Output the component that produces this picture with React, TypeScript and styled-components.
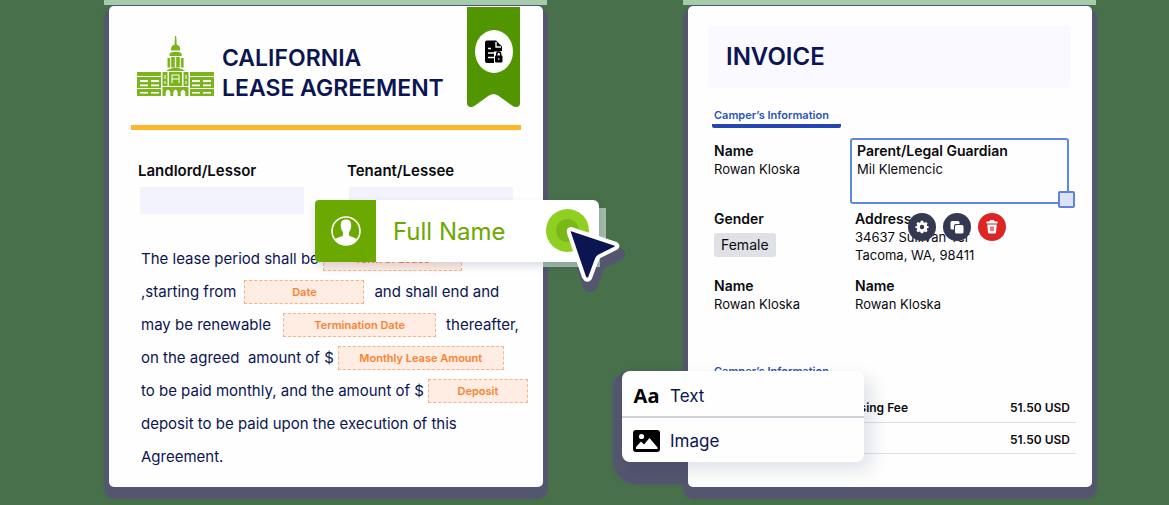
import React from "react";
import styled, { createGlobalStyle } from "styled-components";

const GlobalStyle = createGlobalStyle`
  * { box-sizing: border-box; }
  body { margin: 0; background: #48714b; font-family: Inter, "Liberation Sans", sans-serif; color: #0a0a0f; }
  button, input { font: inherit; color: inherit; }
  h1, h2, p, dl, dd { margin: 0; }
`;

const navy = "#0a1551";
const halo = "#54566f";

const Stage = styled.main`
  display: grid;
  grid-template-columns: minmax(0, 434fr) minmax(0, 404fr);
  column-gap: 145px;
  padding: 6px 77px 18px 109px;
  overflow: hidden;
`;

const Column = styled.div`
  position: relative;
  isolation: isolate;
`;

const TopGlow = styled.div`
  position: absolute;
  inset: -6px -4px auto -5px;
  height: 5px;
  background: #a5cba8;
`;

const Paper = styled.section`
  position: relative;
  height: 100%;
  min-height: 481px;
  background: #fefefe;
  border-radius: 5px;
  box-shadow: 0 -1px 0 0 #4f5382, 0 7px 2px 5px ${halo};
`;

const LeasePaper = styled(Paper)`
  padding: 1px 16px 12px 22px;
`;

const LeaseHeader = styled.header`
  display: flex;
  align-items: flex-start;
  height: 118px;
  padding: 0 7px 0 6px;
`;

const Building = styled.svg`
  flex: none;
  margin-top: 29px;
`;

const LeaseTitle = styled.h1`
  flex: 1;
  margin: 36px 0 0 8px;
  font-size: 23px;
  line-height: 30px;
  font-weight: 600;
  color: ${navy};
  white-space: nowrap;
`;

const RibbonShape = styled.svg`
  flex: none;
`;

const Rule = styled.hr`
  width: 390px;
  max-width: 100%;
  height: 5px;
  margin: 0;
  border: 0;
  background: #ffb629;
`;

const Parties = styled.div`
  display: grid;
  grid-template-columns: 209px 1fr;
  padding: 31px 0 0 7px;
`;

const Party = styled.label`
  display: grid;
  gap: 6px;
  font-size: 15px;
  line-height: 20px;
  font-weight: 600;
`;

const PartyInput = styled.input`
  width: 164px;
  height: 27px;
  margin-left: 2px;
  padding: 0 8px;
  border: 0;
  background: #f3f3fe;
`;

const Terms = styled.div`
  padding: 28px 0 0 10px;
  color: ${navy};
  font-size: 15px;
`;

const Line = styled.p`
  display: flex;
  align-items: center;
  height: 33px;
  white-space: pre;
`;

const Field = styled.button<{ $width: number; $tight?: boolean }>`
  flex: none;
  width: ${(p) => p.$width}px;
  height: 24px;
  margin: 0 10px 0 ${(p) => (p.$tight ? 4 : 8)}px;
  padding: 0;
  border: 1px dashed #f6b48c;
  background: #ffece2;
  color: #f98332;
  font-size: 11px;
  font-weight: 600;
  line-height: 20px;
`;

const NameCard = styled.div`
  position: absolute;
  top: 194px;
  left: 206px;
  display: flex;
  align-items: center;
  width: 284px;
  height: 62px;
  border-radius: 4px 6px 2px 4px;
  background: #fff;
  color: #6ba800;
  font-size: 24px;
  box-shadow: 0 4px 8px rgba(10, 21, 81, 0.14);
`;

const CardGlow = styled.div`
  position: absolute;
  top: 202px;
  left: 434px;
  width: 63px;
  height: 59px;
  background: #a3bba9;
`;

const NameIcon = styled.div`
  display: grid;
  place-items: center;
  width: 61px;
  height: 62px;
  margin-right: 17px;
  border-radius: 4px 0 0 4px;
  background: #6ba800;
`;

const Cursor = styled.svg`
  position: absolute;
  top: 196px;
  left: 434px;
`;

const InvoicePaper = styled(Paper)`
  padding: 19px 16px 20px 20px;
`;

const Banner = styled.header`
  margin-right: 5px;
  padding: 17px 18px 16px;
  border-radius: 4px;
  background: #f9f9ff;
`;

const InvoiceTitle = styled.h2`
  font-size: 24px;
  line-height: 30px;
  font-weight: 600;
  color: ${navy};
`;

const Tab = styled.h3`
  width: 129px;
  margin: 20px 0 0 4px;
  padding: 0 2px 1px;
  border-bottom: 4px solid #2545b0;
  border-radius: 2px;
  color: #2754bd;
  font-size: 11px;
  line-height: 15px;
  font-weight: 600;
  white-space: nowrap;
`;

const Details = styled.dl`
  display: grid;
  grid-template-columns: 141px 1fr;
  grid-template-rows: 68px 67px 67px;
  padding: 14px 2px 0 6px;
  font-size: 13px;
  line-height: 18px;

  dt { font-size: 14px; font-weight: 600; }
`;

const Selected = styled.div`
  position: relative;
  height: 66px;
  margin: -4px 5px 0 -5px;
  padding: 2px 5px;
  border: 2px solid #5b8ae0;
  border-radius: 3px;
`;

const Handle = styled.button`
  position: absolute;
  right: -8px;
  bottom: -6px;
  width: 17px;
  height: 17px;
  padding: 0;
  border: 2px solid #5b84da;
  border-radius: 2px;
  background: #dde2fb;
`;

const Actions = styled.div`
  position: absolute;
  top: 207px;
  left: 220px;
  display: flex;
  gap: 7px;
`;

const Action = styled.button<{ $danger?: boolean }>`
  display: grid;
  place-items: center;
  width: 28px;
  height: 28px;
  padding: 0;
  border: 0;
  border-radius: 50%;
  color: #fff;
  background: ${(p) => (p.$danger ? "#dc2626" : "#343850")};
`;

const Chip = styled.span`
  display: inline-block;
  margin-top: 5px;
  padding: 3px 7px;
  border-radius: 3px;
  background: #dfe1e6;
  font-size: 14px;
`;

const Fees = styled.table`
  width: 100%;
  margin-top: 7px;
  border-collapse: collapse;
  font-size: 12px;
  font-weight: 600;

  td {
    height: 31px;
    padding: 4px 6px 0;
    border-bottom: 1px solid #dfdfe8;
    line-height: 18px;
  }
  td:first-child { width: 200px; padding-right: 0; text-align: right; }
  td:last-child { text-align: right; }
`;

const MenuGlow = styled.div`
  position: absolute;
  top: 366px;
  left: -75px;
  width: 90px;
  height: 112px;
  border-radius: 16px 0 0 24px;
  background: ${halo};
  box-shadow: 0 0 4px ${halo};
`;

const Menu = styled.div`
  position: absolute;
  top: 365px;
  left: -66px;
  width: 242px;
  height: 91px;
  border-radius: 8px;
  background: #fefefe;
  box-shadow: 8px 8px 18px rgba(10, 21, 81, 0.12);
`;

const MenuItem = styled.button`
  display: flex;
  align-items: center;
  gap: 10px;
  width: 100%;
  height: 45px;
  padding: 4px 11px 0;
  border: 0;
  background: none;
  color: ${navy};
  font-size: 17px;
  line-height: 24px;

  & + & { height: 46px; padding-top: 2px; border-top: 2px solid #d0d2da; }
`;

const Letters = styled.span`
  width: 27px;
  color: #000;
  font-family: "Noto Sans", sans-serif;
  font-size: 20px;
  font-weight: 700;
`;

function Capitol() {
  const wing = (
    <>
      <path d="M0 36h24v4H0z M0 41h24v11H0z M0 53h24v7H0z" fill="#7bb41d" />
      <path d="M3 44h8v2H3z M14 44h8v2h-8z M3 48.5h8v1.800H3z M14 48.5h8v1.800h-8z M3 56h8v1.600H3z M14 56h8v1.600h-8z M0 40h24v1H0z" fill="#fff" />
    </>
  );
  return (
    <Building width="77" height="60" viewBox="0 0 77 60" aria-hidden="true">
      {wing}
      <g transform="translate(77 0) scale(-1 1)">{wing}</g>
      <g fill="#7bb41d">
        <path d="M38 0h1.200l.5 9h-2.200z" />
        <path d="M34 13q0-4 4.600-4.600Q43.200 9 43.200 13v1.500h-9.200z" />
        <path d="M32.500 20v-2q1-2.300 6.100-2.300t6.100 2.300v2z" />
        <path d="M30.500 22h2.700v9.500h-2.700zM34.200 21h3.600v10.500h-3.600zM39.200 21h3.600v10.500h-3.600zM43.900 22h2.700v9.500h-2.700z" />
        <path d="M29 35q1.500-2 9.600-3.600Q46.700 33 48.200 35z" />
        <path d="M25.500 36h5v14h-5zM46.500 36h5v14h-5zM32 36h13v14H32z" />
        <path d="M25.500 51h26v9h-3.200v-4q-2.300-4.300-4.600 0v4h-3v-4q-2.200-5-4.400 0v4h-3v-4q-2.300-4.300-4.600 0v4h-3.200z" />
      </g>
      <path d="M27.500 39h1v4h-1zM27.500 45h1v3h-1zM48.500 39h1v4h-1zM48.500 45h1v3h-1zM34.500 39h1v8h-1zM41.500 39h1v8h-1zM35 38.500h7v1h-7zM35 42.500h7v1h-7z" fill="#fff" />
    </Building>
  );
}

function Ribbon() {
  return (
    <RibbonShape width="54" height="101" viewBox="0 0 54 101" aria-hidden="true">
      <path d="M1 0h53v96q0 4-4 4-2 0-4-1.500l-14-10q-4.500-3-9 0l-14 10q-2 1.500-4 1.500-4 0-4-4z" fill="#519600" />
      <ellipse cx="28" cy="44.500" rx="19" ry="21.500" fill="#fff" />
      <path d="M21 33.500h9l6 6V44q-5 0-6 6v6h-9q-2 0-2-2V35.500q0-2 2-2z" fill="#000" />
      <path d="M30 35v5h5M22 41.500h3M22 46h7M22 50.500h6" stroke="#fff" strokeWidth="1.400" fill="none" />
      <path d="M28 44.500h9V57h-9z" fill="#fff" />
      <rect x="29" y="48.500" width="7.500" height="7" rx="1" fill="#000" />
      <path d="M30.700 49v-1.500q0-2.500 2-2.500t2 2.500V49" stroke="#000" strokeWidth="1.500" fill="none" />
      <circle cx="32.700" cy="52" r=".8" fill="#fff" />
    </RibbonShape>
  );
}

function Pointer() {
  const arrow = "M28 27L73 42Q76 44 73 46L57 54Q55 55 54 57L47 76Q44 80 41 75L26 31Q25 27 28 27Z";
  return (
    <Cursor width="84" height="100" viewBox="0 0 84 100" aria-hidden="true">
      <clipPath id="outside">
        <path d="M57 0h27v100H0V66h57z" />
      </clipPath>
      <g clipPath="url(#outside)">
        <path d={arrow} transform="translate(3 8)" fill={halo} stroke={halo} strokeWidth="9" strokeLinejoin="round" />
      </g>
      <circle cx="24.500" cy="28.500" r="21.500" fill="#8fcf22" />
      <circle cx="24.500" cy="28.500" r="11.500" fill="#78b918" />
      <path d={arrow} fill="#0a1551" stroke="#fff" strokeWidth="4" strokeLinejoin="round" />
    </Cursor>
  );
}

function Person() {
  return (
    <svg width="30" height="30" viewBox="0 0 30 30" aria-hidden="true">
      <circle cx="15" cy="15" r="14" fill="none" stroke="#fff" strokeWidth="1.600" />
      <path d="M15 3.500c4 0 5.500 2.700 5.200 6.500-.2 3-1 4.600-2.200 6v3c0 1.500 5 2 7.500 4Q21 29 15 29T4.500 23c2.500-2 7.500-2.500 7.500-4v-3c-1.200-1.400-2-3-2.200-6-.3-3.800 1.200-6.500 5.200-6.500z" fill="#fff" />
    </svg>
  );
}

function Gear() {
  return (
    <svg width="14" height="14" viewBox="0 0 14 14" aria-hidden="true">
      <path d="M5.800.7h2.400l.4 1.700 1 .4 1.500-.9 1.500 1.500-.9 1.500.4 1 1.500.4v1.600l-1.500.4-.4 1 .9 1.500-1.500 1.500-1.500-.9-1 .4-.4 1.500H5.800l-.4-1.500-1-.4-1.500.9-1.500-1.500.9-1.500-.4-1L.4 7.900V6.300l1.500-.4.4-1-.9-1.500 1.500-1.500 1.500.9 1-.4z" fill="#fff" />
      <circle cx="7" cy="7" r="2.200" fill="#343850" />
    </svg>
  );
}

function Copy() {
  return (
    <svg width="14" height="14" viewBox="0 0 14 14" aria-hidden="true">
      <path d="M2 1h6q1.500 0 1.500 1.500V4H6Q4 4 4 6v3.500H2Q.5 9.500.5 8V2.500Q.5 1 2 1z" fill="#fff" />
      <rect x="5" y="5" width="8.500" height="8.500" rx="1.500" fill="#fff" />
    </svg>
  );
}

function Trash() {
  return (
    <svg width="12" height="14" viewBox="0 0 12 14" aria-hidden="true">
      <path d="M4 0h4l.5 1.500H11q.5 0 .5.500v1.500H.5V2q0-.500.5-.500h2.500zM1.300 4.500h9.400l-.7 8q-.1 1-1.200 1H3.200q-1.100 0-1.200-1z" fill="#fff" />
      <path d="M5 6.500v4.500M7 6.500v4.500" stroke="#dc2626" strokeWidth="1.200" />
    </svg>
  );
}

function Picture() {
  return (
    <svg width="27" height="22" viewBox="0 0 27 22" aria-hidden="true">
      <rect width="27" height="22" rx="3" fill="#000" />
      <circle cx="8.500" cy="6.500" r="2.600" fill="#fff" />
      <path d="M3 19v-2l5-5.500 3 3L16.500 8l8 9.500V19z" fill="#fff" />
    </svg>
  );
}

export default function App() {
  return (
    <>
      <GlobalStyle />
      <Stage>
        <Column>
          <TopGlow />
          <LeasePaper>
            <LeaseHeader>
              <Capitol />
              <LeaseTitle>CALIFORNIA<br />LEASE AGREEMENT</LeaseTitle>
              <Ribbon />
            </LeaseHeader>
            <Rule />
            <Parties>
              <Party>Landlord/Lessor<PartyInput /></Party>
              <Party>Tenant/Lessee<PartyInput /></Party>
            </Parties>
            <Terms>
              <Line>The lease period shall be<Field $width={139} $tight>Term of Lease</Field></Line>
              <Line>,starting from<Field $width={120}>Date</Field>and shall end and</Line>
              <Line>may be renewable <Field $width={153}>Termination Date</Field>thereafter,</Line>
              <Line>on the agreed  amount of $<Field $width={166} $tight>Monthly Lease Amount</Field></Line>
              <Line>to be paid monthly, and the amount of $<Field $width={100} $tight>Deposit</Field></Line>
              <Line>deposit to be paid upon the execution of this</Line>
              <Line>Agreement.</Line>
            </Terms>
          </LeasePaper>
          <CardGlow />
          <NameCard>
            <NameIcon><Person /></NameIcon>
            Full Name
          </NameCard>
          <Pointer />
        </Column>

        <Column>
          <TopGlow />
          <MenuGlow />
          <InvoicePaper>
            <Banner><InvoiceTitle>INVOICE</InvoiceTitle></Banner>
            <Tab>Camper’s Information</Tab>
            <Details>
              <div><dt>Name</dt><dd>Rowan Kloska</dd></div>
              <Selected>
                <dt>Parent/Legal Guardian</dt><dd>Mil Klemencic</dd>
                <Handle aria-label="Resize" />
              </Selected>
              <div><dt>Gender</dt><dd><Chip>Female</Chip></dd></div>
              <div><dt>Address</dt><dd>34637 Sullivan Ter<br />Tacoma, WA, 98411</dd></div>
              <div><dt>Name</dt><dd>Rowan Kloska</dd></div>
              <div><dt>Name</dt><dd>Rowan Kloska</dd></div>
            </Details>
            <Tab>Camper’s Information</Tab>
            <Fees>
              <tbody>
                <tr><td>Processing Fee</td><td>51.50 USD</td></tr>
                <tr><td /><td>51.50 USD</td></tr>
              </tbody>
            </Fees>
          </InvoicePaper>
          <Actions>
            <Action aria-label="Settings"><Gear /></Action>
            <Action aria-label="Duplicate"><Copy /></Action>
            <Action $danger aria-label="Delete"><Trash /></Action>
          </Actions>
          <Menu>
            <MenuItem><Letters>Aa</Letters>Text</MenuItem>
            <MenuItem><Picture />Image</MenuItem>
          </Menu>
        </Column>
      </Stage>
    </>
  );
}
